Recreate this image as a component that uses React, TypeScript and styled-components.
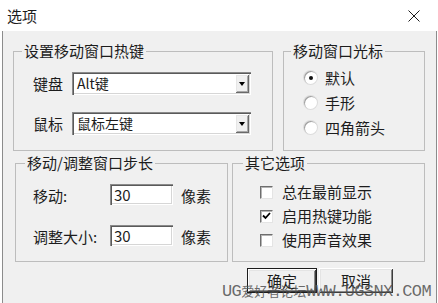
import React from "react";
import styled, { createGlobalStyle, css } from "styled-components";

const GlobalStyle = createGlobalStyle`
  html, body {
    margin: 0;
    padding: 0;
    background: #ffffff;
  }
  body {
    font-family: "Noto Sans CJK SC", "Noto Sans", sans-serif;
    color: #1c1c1c;
  }
  * {
    box-sizing: border-box;
  }
`;

const Window = styled.div`
  position: relative;
  width: 438px;
  height: 303px;
  display: flex;
  flex-direction: column;
  overflow: hidden;
`;

const TitleBar = styled.div`
  flex: none;
  height: 31px;
  display: flex;
  align-items: center;
  justify-content: space-between;
  padding: 0 18px 0 7px;
  background: #ffffff;
  font-size: 15px;
  line-height: 20px;
`;

const Body = styled.div`
  flex: 1;
  width: 435px;
  margin-left: 2px;
  padding: 10px 0 0 10px;
  display: flex;
  flex-direction: column;
  gap: 2px;
  background: #f0f0f0;
  border-left: 1px solid #8c8c8c;
  border-right: 1px solid #8c8c8c;
`;

const Row = styled.div<{ $gap: number; $indent?: number }>`
  display: flex;
  gap: ${({ $gap }) => $gap}px;
  padding-left: ${({ $indent = 0 }) => $indent}px;
`;

const GroupBox = styled.fieldset<{ $w: number; $h: number }>`
  margin: 0;
  padding: 0;
  min-width: 0;
  width: ${({ $w }) => $w}px;
  height: ${({ $h }) => $h}px;
  border: 1px solid #bdbdbd;
`;

const Legend = styled.legend<{ $indent: number }>`
  margin-left: ${({ $indent }) => $indent}px;
  padding: 0 2px;
  font-size: 15px;
  line-height: 20px;
`;

const GroupBody = styled.div<{ $top: number; $left: number; $gap: number }>`
  display: flex;
  flex-direction: column;
  gap: ${({ $gap }) => $gap}px;
  padding: ${({ $top, $left }) => `${$top}px 0 0 ${$left}px`};
`;

const FieldRow = styled.div`
  display: flex;
  align-items: center;
`;

const FieldLabel = styled.span<{ $w: number; $drop?: number }>`
  width: ${({ $w }) => $w}px;
  font-size: 15px;
  line-height: 20px;
  padding-top: ${({ $drop = 0 }) => $drop}px;
  white-space: nowrap;
`;

const sunken = css`
  background: #ffffff;
  box-shadow: inset 1px 1px 0 #8a8a8a, inset 2px 2px 0 #5a5a5a,
    inset -1px -1px 0 #ffffff, inset -2px -2px 0 #d6d6d6;
`;

const Combo = styled.div`
  ${sunken};
  width: 179px;
  height: 23px;
  padding: 2px;
  display: flex;
  align-items: stretch;
`;

const ComboText = styled.span`
  flex: 1;
  padding-left: 3px;
  font-size: 14px;
  line-height: 19px;
`;

const DropButton = styled.span`
  width: 14px;
  display: flex;
  align-items: center;
  justify-content: center;
  background: #f0f0f0;
  box-shadow: inset 1px 1px 0 #ffffff, inset -1px -1px 0 #6a6a6a,
    inset 2px 2px 0 #e6e6e6, inset -2px -2px 0 #a8a8a8;

  &::after {
    content: "";
    border-left: 3.5px solid transparent;
    border-right: 3.5px solid transparent;
    border-top: 4px solid #000000;
  }
`;

const NumberBox = styled.div`
  ${sunken};
  width: 63px;
  height: 21px;
  padding: 0 0 0 4px;
  font-size: 15px;
  line-height: 21px;
`;

const Unit = styled.span`
  margin-left: 8px;
  padding-top: 4px;
  font-size: 15px;
  line-height: 20px;
`;

const OptionRow = styled.div<{ $h: number }>`
  height: ${({ $h }) => $h}px;
  display: flex;
  align-items: center;
  font-size: 15px;
  line-height: 20px;
`;

const Radio = styled.span<{ $on?: boolean }>`
  flex: none;
  width: 13px;
  height: 13px;
  margin-right: 8px;
  border-radius: 50%;
  display: flex;
  align-items: center;
  justify-content: center;
  background: #ffffff;
  box-shadow: inset 1px 1px 0 #a0a0a0, 0 0 0 1px #dcdcdc;

  &::after {
    content: "";
    display: ${({ $on }) => ($on ? "block" : "none")};
    width: 4px;
    height: 4px;
    border-radius: 50%;
    background: #111111;
  }
`;

const Check = styled.span`
  flex: none;
  width: 13px;
  height: 13px;
  margin-right: 9px;
  display: flex;
  align-items: center;
  justify-content: center;
  background: #ffffff;
  border-top: 1px solid #6e6e6e;
  border-left: 1px solid #6e6e6e;
  border-right: 1px solid #e4e4e4;
  border-bottom: 1px solid #e4e4e4;
  box-shadow: inset 1px 1px 0 #b4b4b4;
`;

const ButtonRow = styled.div`
  display: flex;
  justify-content: flex-end;
  gap: 2px;
  margin-top: 4px;
  padding-right: 43px;
`;

const Button = styled.button<{ $w: number; $default?: boolean }>`
  width: ${({ $w }) => $w}px;
  height: 25px;
  padding: 0;
  font-family: inherit;
  font-size: 15px;
  line-height: 20px;
  color: #1c1c1c;
  background: #f0f0f0;
  border: none;
  box-shadow: inset 1px 1px 0 #ffffff, inset -1px -1px 0 #3c3c3c,
    inset 2px 2px 0 #e4e4e4, inset -2px -2px 0 #8a8a8a;

  ${({ $default }) =>
    $default &&
    css`
      border: 1px solid #1c1c1c;
    `}
`;

const Watermark = styled.div`
  position: absolute;
  left: 222px;
  top: 281px;
  display: flex;
  align-items: baseline;
  color: rgba(80, 80, 80, 0.85);
  font-family: "Liberation Mono", "Noto Sans CJK SC", monospace;
  font-size: 17px;
  letter-spacing: -0.6px;
  line-height: 20px;
  white-space: pre;
`;

const WatermarkCjk = styled.span`
  font-family: "Noto Sans CJK SC", sans-serif;
  font-size: 13px;
  letter-spacing: 0;
`;

const CloseIcon = () => (
  <svg width="12" height="12" viewBox="0 0 12 12">
    <path d="M0.5 0.5 L11.5 11.5 M11.5 0.5 L0.5 11.5" stroke="#1c1c1c" strokeWidth="1" />
  </svg>
);

const CheckMark = () => (
  <svg width="9" height="8" viewBox="0 0 9 8">
    <path d="M1 3.5 L3.5 6 L8 1" fill="none" stroke="#000" strokeWidth="1.8" />
  </svg>
);

const cursors = [
  { label: "默认", on: true },
  { label: "手形", on: false },
  { label: "四角箭头", on: false },
];

const options = [
  { label: "总在最前显示", on: false },
  { label: "启用热键功能", on: true },
  { label: "使用声音效果", on: false },
];

export default function App() {
  return (
    <>
      <GlobalStyle />
      <Window>
        <TitleBar>
          <span>选项</span>
          <CloseIcon />
        </TitleBar>
        <Body>
          <Row $gap={10}>
            <GroupBox $w={260} $h={110}>
              <Legend $indent={8}>设置移动窗口热键</Legend>
              <GroupBody $top={11} $left={19} $gap={17}>
                <FieldRow>
                  <FieldLabel $w={39}>键盘</FieldLabel>
                  <Combo>
                    <ComboText>Alt键</ComboText>
                    <DropButton />
                  </Combo>
                </FieldRow>
                <FieldRow>
                  <FieldLabel $w={39}>鼠标</FieldLabel>
                  <Combo>
                    <ComboText>鼠标左键</ComboText>
                    <DropButton />
                  </Combo>
                </FieldRow>
              </GroupBody>
            </GroupBox>
            <GroupBox $w={142} $h={110}>
              <Legend $indent={7}>移动窗口光标</Legend>
              <GroupBody $top={4} $left={20} $gap={0}>
                {cursors.map((c) => (
                  <OptionRow key={c.label} $h={25}>
                    <Radio $on={c.on} />
                    {c.label}
                  </OptionRow>
                ))}
              </GroupBody>
            </GroupBox>
          </Row>
          <Row $gap={4} $indent={2}>
            <GroupBox $w={213} $h={109}>
              <Legend $indent={9}>移动/调整窗口步长</Legend>
              <GroupBody $top={9} $left={17} $gap={17}>
                <FieldRow>
                  <FieldLabel $w={77} $drop={4}>移动:</FieldLabel>
                  <NumberBox>30</NumberBox>
                  <Unit>像素</Unit>
                </FieldRow>
                <FieldRow>
                  <FieldLabel $w={77} $drop={4}>调整大小:</FieldLabel>
                  <NumberBox>30</NumberBox>
                  <Unit>像素</Unit>
                </FieldRow>
              </GroupBody>
            </GroupBox>
            <GroupBox $w={193} $h={109}>
              <Legend $indent={10}>其它选项</Legend>
              <GroupBody $top={7} $left={27} $gap={0}>
                {options.map((o) => (
                  <OptionRow key={o.label} $h={24}>
                    <Check>{o.on && <CheckMark />}</Check>
                    {o.label}
                  </OptionRow>
                ))}
              </GroupBody>
            </GroupBox>
          </Row>
          <ButtonRow>
            <Button $w={70} $default>
              确定
            </Button>
            <Button $w={74}>取消</Button>
          </ButtonRow>
        </Body>
        <Watermark>
          UG<WatermarkCjk>爱好者论坛</WatermarkCjk>WWW.UGSNX.COM
        </Watermark>
      </Window>
    </>
  );
}
